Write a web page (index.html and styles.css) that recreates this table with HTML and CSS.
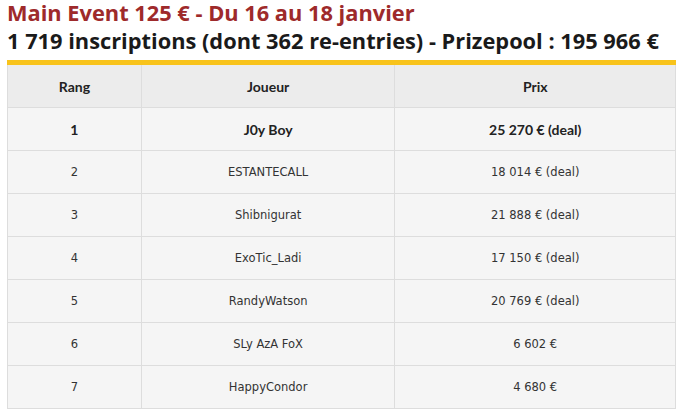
FILE: index.html
```html
<!DOCTYPE html>
<html lang="fr">
<head>
<meta charset="utf-8">
<link rel="stylesheet" href="styles.css">
</head>
<body>
<div class="page">
  <h2 class="title">Main Event 125 € - Du 16 au 18 janvier</h2>
  <h3 class="subtitle">1 719 inscriptions (dont 362 re-entries) - Prizepool : 195 966 €</h3>
  <table class="results">
    <colgroup><col class="c1"><col class="c2"><col class="c3"></colgroup>
    <thead>
      <tr><th>Rang</th><th>Joueur</th><th>Prix</th></tr>
    </thead>
    <tbody>
      <tr class="win"><td>1</td><td>J0y Boy</td><td>25 270 € (deal)</td></tr>
      <tr><td>2</td><td>ESTANTECALL</td><td>18 014 € (deal)</td></tr>
      <tr><td>3</td><td>Shibnigurat</td><td>21 888 € (deal)</td></tr>
      <tr><td>4</td><td>ExoTic_Ladi</td><td>17 150 € (deal)</td></tr>
      <tr><td>5</td><td>RandyWatson</td><td>20 769 € (deal)</td></tr>
      <tr><td>6</td><td>SLy AzA FoX</td><td>6 602 €</td></tr>
      <tr><td>7</td><td>HappyCondor</td><td>4 680 €</td></tr>
    </tbody>
  </table>
</div>
</body>
</html>
```
FILE: styles.css
```css
html, body { margin: 0; padding: 0; background: #fff; }
.page { padding: 0 4px 0 7px; }
.title {
  margin: 0;
  font-family: "Open Sans", sans-serif;
  font-weight: 700;
  font-size: 21.8px;
  line-height: 26px;
  color: #9e2a2b;
}
.subtitle {
  margin: 0;
  font-family: "Open Sans", sans-serif;
  font-weight: 700;
  font-size: 21.8px;
  line-height: 30px;
  color: #1a1a1a;
  padding-bottom: 4px;
}
.results {
  width: 669px;
  border-collapse: collapse;
  border-top: 5px solid #f8c31b;
  font-family: "DejaVu Sans", sans-serif;
  font-size: 11.5px;
  color: #333;
  text-align: center;
}
.c1 { width: 134px; }
.c2 { width: 254px; }
.c3 { width: 281px; }
.results th, .results td {
  border: 1px solid #dddddd;
  height: 42px;
  padding: 0;
  vertical-align: middle;
}
.results th {
  background: #ececec;
  font-family: "Lato", sans-serif;
  font-size: 14px;
  font-weight: 700;
  color: #222;
  height: 42px;
}
.results td { background: #f5f5f5; }
.results tr.win td {
  font-family: "Lato", sans-serif;
  font-size: 14px;
  font-weight: 700;
  color: #222;
}
```
